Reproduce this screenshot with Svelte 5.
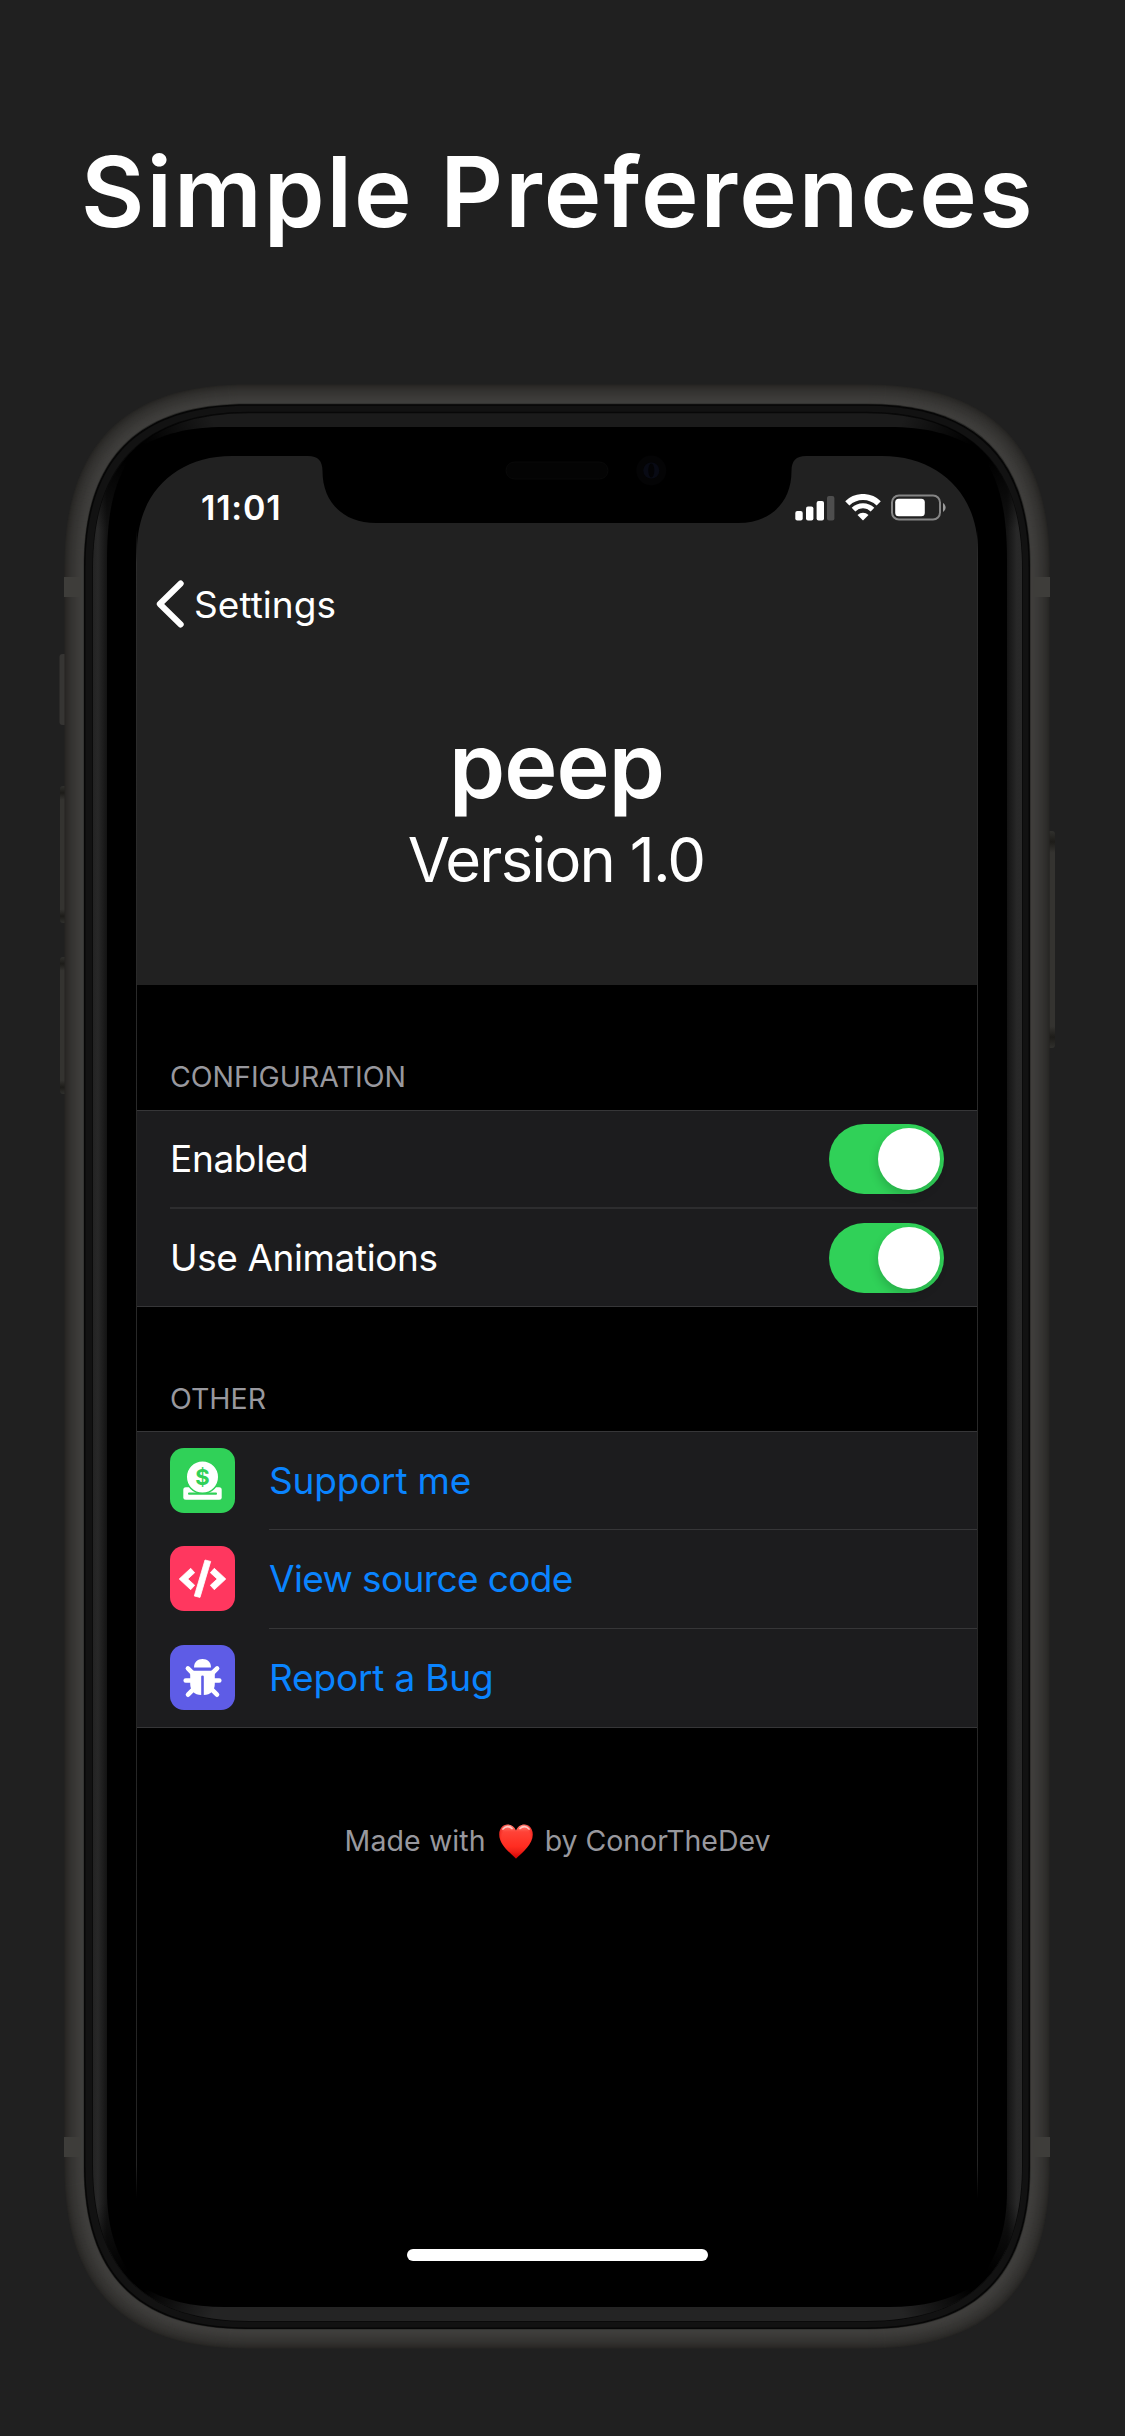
<script>
  const toggles = $state([
    { label: 'Enabled', cls: 'enabled', on: true },
    { label: 'Use Animations', cls: 'animations', on: true }
  ]);

  const links = [
    { label: 'Support me', cls: 'support' },
    { label: 'View source code', cls: 'source' },
    { label: 'Report a Bug', cls: 'report' }
  ];

  // Rectangle with continuous (superellipse-like) corners.
  function squircle(x0, y0, x1, y1, e, k = 0.67) {
    const h = e * (1 - k);
    return (
      `M${x0} ${y0 + e}C${x0} ${y0 + h} ${x0 + h} ${y0} ${x0 + e} ${y0}` +
      `H${x1 - e}C${x1 - h} ${y0} ${x1} ${y0 + h} ${x1} ${y0 + e}` +
      `V${y1 - e}C${x1} ${y1 - h} ${x1 - h} ${y1} ${x1 - e} ${y1}` +
      `H${x0 + e}C${x0 + h} ${y1} ${x0} ${y1 - h} ${x0} ${y1 - e}Z`
    );
  }

  // Metal band: nested shells, brighter towards the glass.
  const shells = Array.from({ length: 20 }, (_, i) => {
    const t = Math.min(1, i / 16);
    const v = Math.round(38 + 25 * Math.pow(t, 0.65));
    return {
      d: squircle(64.5 + i, 384.5 + i, 1049.7 - i, 2348.5 - i, 182 - i),
      fill: i === 19 ? '#2b2b29' : `rgb(${v},${v - 1},${v - 3})`
    };
  });

  const screen =
    'M137 551C137 494 175 456 232 456H308C318 456 322.500 461 322.500 471C322.500 502 343 523 376 523' +
    'H738C771 523 791.500 502 791.500 471C791.500 461 796 456 806 456H882C939 456 978 494 978 551V2240H137Z';

  const glass =
    'M107 563C107 513 113 480 136 450C162 433 190 427 225 427H889C924 427 952 433 978 450C1001 480 1007 513 1007 563' +
    'V2190C1007 2230 997 2258 976 2284C952 2300 924 2307 889 2307H225C190 2307 162 2300 138 2284C117 2258 107 2230 107 2190Z';

  const ring = squircle(93, 412.5, 1022, 2321, 156);
</script>

<main class="stage">
  <div class="content">
    <h1><span>Simple Preferences</span></h1>

    <section class="screen">
      <div class="status">
        <span class="time">11:01</span>
        <div class="indicators">
          <svg class="signal" width="40" height="26" viewBox="0 0 40 26">
            <g fill="#fff">
              <rect x="0.300" y="16" width="7.400" height="9.500" rx="2" />
              <rect x="11" y="11.500" width="7.400" height="14" rx="2" />
              <rect x="21.600" y="6" width="7.400" height="19.500" rx="2" />
            </g>
            <rect x="32" y="1" width="7.400" height="24.500" rx="2" fill="#4e4e4e" />
          </svg>
          <svg class="wifi" width="36" height="27" viewBox="0 0 36 27" fill="none" stroke="#fff">
            <path d="M2.300 9.300A22.600 22.600 0 0 1 33.700 9.300" stroke-width="6" />
            <path d="M8.500 15.600A13.700 13.700 0 0 1 27.500 15.600" stroke-width="5.200" />
            <path d="M12.500 21A8 8 0 0 1 23.500 21L18 26.500Z" fill="#fff" stroke="none" />
          </svg>
          <svg class="battery" width="56" height="27" viewBox="0 0 56 27">
            <rect x="1" y="1.500" width="48" height="24" rx="7" fill="none" stroke="#858585" stroke-width="2" />
            <rect x="4.200" y="4.800" width="29.600" height="17.400" rx="3.500" fill="#fff" />
            <path d="M52 9a5.200 5.200 0 0 1 0 9z" fill="#9a9a9a" />
          </svg>
        </div>
      </div>

      <nav>
        <svg width="30" height="48" viewBox="0 0 30 48">
          <path d="M25.700 3.500L4.800 24L25.700 44.500" fill="none" stroke="#fff" stroke-width="6" stroke-linecap="round" stroke-linejoin="round" />
        </svg>
        <span>Settings</span>
      </nav>

      <header>
        <h2>peep</h2>
        <p>Version 1.0</p>
      </header>

      <h3>CONFIGURATION</h3>
      <div class="group config">
        {#each toggles as t}
          <div class="row">
            <span class="label {t.cls}">{t.label}</span>
            <button class="switch" class:on={t.on} aria-label={t.label} onclick={() => (t.on = !t.on)}><i></i></button>
          </div>
        {/each}
      </div>

      <h3>OTHER</h3>
      <div class="group other">
        {#each links as l}
          <div class="row">
            <svg class="tile {l.cls}" width="65" height="65" viewBox="0 0 65 65">
              {#if l.cls === 'support'}
                <rect x="13.300" y="39.300" width="38.400" height="12.400" rx="2.500" fill="#fff" />
                <rect x="18" y="44.500" width="29" height="2.200" rx="1" fill="#30d158" />
                <circle cx="32.500" cy="29" r="16.300" fill="#fff" stroke="#30d158" stroke-width="1.600" />
                <text x="32.500" y="36.800" text-anchor="middle" fill="#30d158">$</text>
              {:else if l.cls === 'source'}
                <g fill="#fff" stroke="#fff" stroke-width="0.800" stroke-linejoin="round">
                  <path d="M9.200 33L20.700 22.300L24.700 26.700L17.800 33L24.700 39.300L20.700 43.700Z" />
                  <path d="M55.800 33L44.300 22.300L40.300 26.700L47.200 33L40.300 39.300L44.300 43.700Z" />
                  <path d="M35 14L40.700 15.400L30 51.400L24.300 50Z" />
                </g>
              {:else}
                <path d="M24 22.500C24 17 27.500 14 32.500 14S41 17 41 22.500Z" fill="#fff" />
                <path d="M20.200 25.800H44.800V39C44.800 45.500 40.500 50 33.800 50V31.500Q33.800 30.500 32.500 30.500T31.200 31.500V50C24.500 50 20.200 45.500 20.200 39Z" fill="#fff" />
                <path d="M17.900 23.400L23 28.500M47.100 23.400L42 28.500M15.700 35.500H22M49.300 35.500H43M18 49.700L24 43.700M47 49.700L41 43.700" stroke="#fff" stroke-width="4.600" stroke-linecap="round" />
              {/if}
            </svg>
            <a class="label {l.cls}" href="#{l.cls}">{l.label}</a>
          </div>
        {/each}
      </div>

      <footer>
        <span class="made">Made with</span>
        <svg width="34" height="35" viewBox="0 0 34 35">
          <defs>
            <linearGradient id="heart" x1="0" y1="0" x2="0" y2="1">
              <stop offset="0" stop-color="#ff8478" />
              <stop offset="0.220" stop-color="#ff4237" />
              <stop offset="0.650" stop-color="#ff2c20" />
              <stop offset="1" stop-color="#d80f0b" />
            </linearGradient>
            <radialGradient id="heartEdge" cx="0.500" cy="0.400" r="0.600">
              <stop offset="0.700" stop-color="#e00" stop-opacity="0" />
              <stop offset="1" stop-color="#c80000" stop-opacity="0.700" />
            </radialGradient>
          </defs>
          <path d="M17 34.500C10 28 0.300 20.500 0.300 10.500C0.300 4.500 4 0.500 8.700 0.500C12.500 0.500 15.500 2.800 17 6.600C18.500 2.800 21.500 0.500 25.300 0.500C30 0.500 33.700 4.500 33.700 10.500C33.700 20.500 24 28 17 34.500Z" fill="url(#heart)" />
          <path d="M17 34.500C10 28 0.300 20.500 0.300 10.500C0.300 4.500 4 0.500 8.700 0.500C12.500 0.500 15.500 2.800 17 6.600C18.500 2.800 21.500 0.500 25.300 0.500C30 0.500 33.700 4.500 33.700 10.500C33.700 20.500 24 28 17 34.500Z" fill="url(#heartEdge)" />
          <g fill="none" stroke="#ffd9d4" stroke-width="1.700" stroke-linecap="round" opacity="0.850">
            <path d="M4 5C6.500 2 10.500 2 13 4.500" />
            <path d="M21 4.500C23.500 2 27.500 2 30 5" />
          </g>
        </svg>
        <span class="by">by ConorTheDev</span>
      </footer>

      <div class="home"></div>
    </section>
  </div>

  <svg class="device" width="1125" height="2436" viewBox="0 0 1125 2436" aria-hidden="true">
    <defs>
      <linearGradient id="sideL" gradientUnits="userSpaceOnUse" x1="93" y1="0" x2="107" y2="0">
        <stop offset="0" stop-color="#232323" />
        <stop offset="0.350" stop-color="#282828" />
        <stop offset="1" stop-color="#131313" />
      </linearGradient>
      <linearGradient id="sideR" gradientUnits="userSpaceOnUse" x1="1022" y1="0" x2="1007" y2="0">
        <stop offset="0" stop-color="#292929" />
        <stop offset="0.350" stop-color="#282828" />
        <stop offset="1" stop-color="#131313" />
      </linearGradient>
      <linearGradient id="button" x1="0" y1="0" x2="0" y2="1">
        <stop offset="0" stop-color="#30302d" />
        <stop offset="0.050" stop-color="#1d1c19" />
        <stop offset="0.100" stop-color="#343330" />
        <stop offset="0.900" stop-color="#343330" />
        <stop offset="0.950" stop-color="#1d1c19" />
        <stop offset="1" stop-color="#30302d" />
      </linearGradient>
      <linearGradient id="edge" gradientUnits="userSpaceOnUse" x1="0" y1="530" x2="0" y2="2198">
        <stop offset="0" stop-color="#2c2c2c" stop-opacity="0" />
        <stop offset="0.020" stop-color="#2c2c2c" />
        <stop offset="0.980" stop-color="#242424" />
        <stop offset="1" stop-color="#242424" stop-opacity="0" />
      </linearGradient>
      <radialGradient id="corner">
        <stop offset="0.150" stop-color="#000" />
        <stop offset="1" stop-color="#000" stop-opacity="0" />
      </radialGradient>
      <clipPath id="ringClip"><path d={ring} /></clipPath>
      <mask id="window">
        <rect width="1125" height="2436" fill="#fff" />
        <path d={screen} fill="#000" />
        <rect x="390" y="2235" width="340" height="40" fill="#000" />
      </mask>
    </defs>

    <g>
      <rect x="59.500" y="654" width="8" height="71" rx="3" fill="#363533" />
      <rect x="60" y="786" width="8" height="137" rx="3" fill="url(#button)" />
      <rect x="60" y="957" width="8" height="137" rx="3" fill="url(#button)" />
      <rect x="1046" y="831" width="9" height="217" rx="3" fill="url(#button)" />
    </g>

    <g mask="url(#window)">
      {#each shells as s}
        <path d={s.d} fill={s.fill} />
      {/each}
      <g fill="#3e3d3a">
        <rect x="64" y="577" width="17" height="20" />
        <rect x="1033" y="577" width="17" height="20" />
        <rect x="64" y="2137" width="17" height="20" />
        <rect x="1033" y="2137" width="17" height="20" />
      </g>
      <path d={squircle(84, 404.3, 1030, 2329, 163)} fill="#060606" />
      <path d={squircle(85.5, 405.8, 1028.5, 2327.5, 162)} fill="#121212" />
      <path d={ring} fill="#1b1b1b" stroke="#080808" stroke-width="1.500" />
      <g clip-path="url(#ringClip)">
        <rect x="93" y="2250" width="929" height="71" fill="#242424" />
        <rect x="93" y="448" width="50" height="1836" fill="url(#sideL)" />
        <rect x="972" y="448" width="50" height="1836" fill="url(#sideR)" />
        <circle cx="134" cy="452" r="85" fill="url(#corner)" />
        <circle cx="981" cy="452" r="85" fill="url(#corner)" />
        <circle cx="134" cy="2282" r="85" fill="url(#corner)" />
        <circle cx="981" cy="2282" r="85" fill="url(#corner)" />
      </g>
      <path d={glass} fill="#000" />
      <rect x="506" y="462" width="102" height="17" rx="8.500" fill="#040404" stroke="#090909" />
      <circle cx="651.300" cy="470.500" r="15" fill="#040405" />
      <circle cx="651.300" cy="470.500" r="8" fill="#080a14" />
      <ellipse cx="651.300" cy="470.500" rx="3" ry="7" fill="#030305" />
    </g>
    <rect x="136" y="530" width="1" height="1668" fill="url(#edge)" />
    <rect x="977" y="530" width="1" height="1668" fill="url(#edge)" />
  </svg>
</main>

<style>
  :global(body) {
    margin: 0;
    background: #202020;
  }
  .stage {
    display: grid;
    width: 1125px;
    height: 2436px;
    overflow: hidden;
    background: #202020;
    color: #fff;
    font-family: Inter, 'Liberation Sans', sans-serif;
  }
  .content,
  .device {
    grid-area: 1 / 1;
  }
  .device {
    pointer-events: none;
    z-index: 1;
  }
  h1, h2, h3, p {
    margin: 0;
    font-weight: 400;
  }
  svg {
    display: block;
    flex: none;
  }
  h1 {
    box-sizing: border-box;
    height: 456px;
    padding: 132px 0 0 81px;
    font-size: 97.5px;
    line-height: 120px;
    font-weight: 600;
    letter-spacing: 2px;
    white-space: nowrap;
  }
  .screen {
    display: flex;
    flex-direction: column;
    box-sizing: border-box;
    width: 841px;
    height: 1851px;
    margin-left: 137px;
    background: #000;
    white-space: nowrap;
  }
  .status,
  nav,
  header {
    box-sizing: border-box;
    background: #212121;
  }
  .status {
    display: flex;
    align-items: center;
    justify-content: space-between;
    height: 103px;
    padding: 0 31px 0 64px;
  }
  .time {
    font-size: 34px;
    font-weight: 600;
    letter-spacing: 0.8px;
  }
  .indicators {
    display: flex;
    align-items: center;
  }
  .wifi {
    margin: 0 10px;
  }
  nav {
    display: flex;
    align-items: center;
    gap: 9px;
    height: 90px;
    padding-left: 18px;
    font-size: 37px;
    letter-spacing: 0.05px;
  }
  header {
    height: 336px;
    padding-top: 63px;
    text-align: center;
  }
  h2 {
    padding-right: 2px;
    font-size: 90px;
    line-height: 108px;
    font-weight: 600;
    letter-spacing: -1px;
  }
  header p {
    padding: 1px 3px 0 0;
    font-size: 61.5px;
    line-height: 78px;
    letter-spacing: -1.77px;
  }
  h3 {
    box-sizing: border-box;
    height: 125px;
    padding: 76px 0 0 33px;
    font-size: 28.5px;
    line-height: 31px;
    color: #98989e;
  }
  .group {
    display: grid;
    box-sizing: border-box;
    background: #1c1c1e;
    border-top: 1px solid #363638;
    border-bottom: 1px solid #363638;
  }
  .config {
    height: 197px;
    grid-template-rows: 96px 99px;
  }
  .other {
    height: 297px;
    margin-top: -1px;
    grid-template-rows: 97px 99px 99px;
  }
  .row {
    display: flex;
    align-items: center;
  }
  .config .row {
    justify-content: space-between;
    margin-left: 33px;
    padding-right: 34px;
  }
  .config .row + .row {
    border-top: 2px solid #2d2d2f;
  }
  .label {
    font-size: 37px;
    line-height: 48px;
  }
  .enabled { letter-spacing: -0.35px; }
  .animations { letter-spacing: -0.4px; }
  a.support { letter-spacing: -0.2px; }
  a.source { letter-spacing: -0.62px; }
  a.report { letter-spacing: -0.18px; }
  .other .row {
    padding-left: 33px;
    gap: 34px;
  }
  a.label {
    flex: 1;
    height: 100%;
    display: flex;
    align-items: center;
    box-sizing: border-box;
    color: #0a84ff;
    text-decoration: none;
  }
  .row + .row a.label {
    border-top: 1px solid #363638;
  }
  .tile {
    border-radius: 14px;
  }
  .tile.support { background: #30d158; }
  .tile.source { background: #ff375f; }
  .tile.report { background: #5e5ce6; }
  .tile text {
    font-size: 22px;
    font-weight: 700;
  }
  .switch {
    display: flex;
    box-sizing: border-box;
    width: 115px;
    height: 70px;
    padding: 4px;
    border: 0;
    border-radius: 35px;
    background: #39393d;
  }
  .switch.on {
    justify-content: flex-end;
    background: #30d158;
  }
  .switch i {
    width: 62px;
    height: 62px;
    border-radius: 50%;
    background: #fff;
    box-shadow: -1px 5px 10px rgba(0, 0, 0, 0.16);
  }
  footer {
    display: flex;
    align-items: center;
    justify-content: center;
    height: 40px;
    margin-top: 93px;
    font-size: 28.5px;
    line-height: 40px;
    color: #98989e;
  }
  footer svg {
    margin: 0 12px 0 13px;
  }
  .made { letter-spacing: 0.1px; }
  .by { letter-spacing: -0.05px; }
  .home {
    width: 301px;
    height: 12px;
    margin: auto 0 46px 270px;
    border-radius: 6px;
    background: #fff;
  }
</style>
